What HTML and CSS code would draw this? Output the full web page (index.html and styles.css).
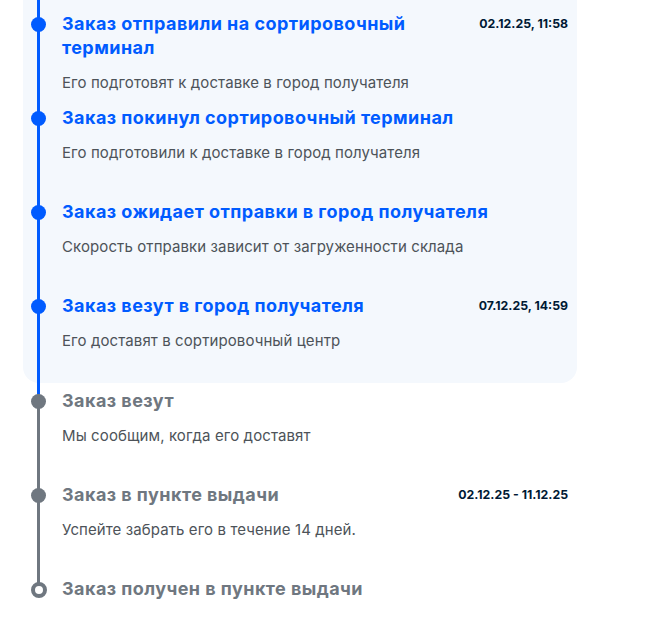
FILE: index.html
```html
<!DOCTYPE html>
<html lang="ru">
<head>
<meta charset="utf-8">
<link rel="stylesheet" href="styles.css">
</head>
<body>
<div class="timeline">
  <div class="panel">
    <div class="item done first">
      <div class="head">
        <div class="title">Заказ отправили на сортировочный терминал</div>
        <div class="date">02.12.25, 11:58</div>
      </div>
      <div class="desc">Его подготовят к доставке в город получателя</div>
    </div>
    <div class="item done">
      <div class="head">
        <div class="title">Заказ покинул сортировочный терминал</div>
      </div>
      <div class="desc">Его подготовили к доставке в город получателя</div>
    </div>
    <div class="item done">
      <div class="head">
        <div class="title">Заказ ожидает отправки в город получателя</div>
      </div>
      <div class="desc">Скорость отправки зависит от загруженности склада</div>
    </div>
    <div class="item done last-done">
      <div class="head">
        <div class="title">Заказ везут в город получателя</div>
        <div class="date">07.12.25, 14:59</div>
      </div>
      <div class="desc">Его доставят в сортировочный центр</div>
    </div>
  </div>
  <div class="rest">
    <div class="item pending next">
      <div class="head">
        <div class="title">Заказ везут</div>
      </div>
      <div class="desc">Мы сообщим, когда его доставят</div>
    </div>
    <div class="item pending">
      <div class="head">
        <div class="title">Заказ в пункте выдачи</div>
        <div class="date">02.12.25 - 11.12.25</div>
      </div>
      <div class="desc">Успейте забрать его в течение 14 дней.</div>
    </div>
    <div class="item pending final">
      <div class="head">
        <div class="title">Заказ получен в пункте выдачи</div>
      </div>
    </div>
  </div>
</div>
</body>
</html>
```
FILE: styles.css
```css
*, *::before, *::after { box-sizing: border-box; }
html, body { margin: 0; padding: 0; background: #fff; }
body {
  font-family: Inter, "Noto Sans", sans-serif;
  color: #001a34;
}
.timeline {
  width: 554px;
  margin-left: 23px;
}
.panel {
  background: #f4f8fd;
  border-radius: 0 0 16px 16px;
  padding-top: 12px;
}
.item {
  position: relative;
  min-height: 94px;
  padding: 0 9px 0 39px;
}
.item.last-done { min-height: 89px; }
.item.final { min-height: 30px; }
.rest { padding-top: 6px; }
.item::before {
  content: "";
  position: absolute;
  left: 14px;
  top: 0;
  bottom: 0;
  width: 3px;
}
.item.first::before { top: -12px; }
.item.last-done::before { bottom: -11px; }
.item.next::before { top: 5px; }
.item.final::before { bottom: auto; height: 12px; }
.item::after {
  content: "";
  position: absolute;
  left: 8px;
  top: 5px;
  width: 15px;
  height: 15px;
  border-radius: 50%;
  z-index: 1;
}
.done::before, .done::after { background: #005bff; }
.pending::before, .pending::after { background: #6f7780; }
.final::after {
  left: 7.5px;
  top: 4.5px;
  width: 16px;
  height: 16px;
  background: #fff;
  border: 4.5px solid #6f7780;
}
.head {
  display: flex;
  align-items: flex-start;
  justify-content: space-between;
  gap: 24px;
}
.title {
  font-size: 18px;
  line-height: 24px;
  font-weight: 700;
  letter-spacing: 0.45px;
}
.done .title { color: #005bff; }
.pending .title { color: #6f7780; }
.date {
  flex: none;
  font-size: 12.3px;
  line-height: 24px;
  font-weight: 700;
  color: #001a34;
}
.desc {
  margin-top: 13px;
  font-size: 15px;
  line-height: 20px;
  letter-spacing: 0.1px;
  color: #4d5359;
}
```
